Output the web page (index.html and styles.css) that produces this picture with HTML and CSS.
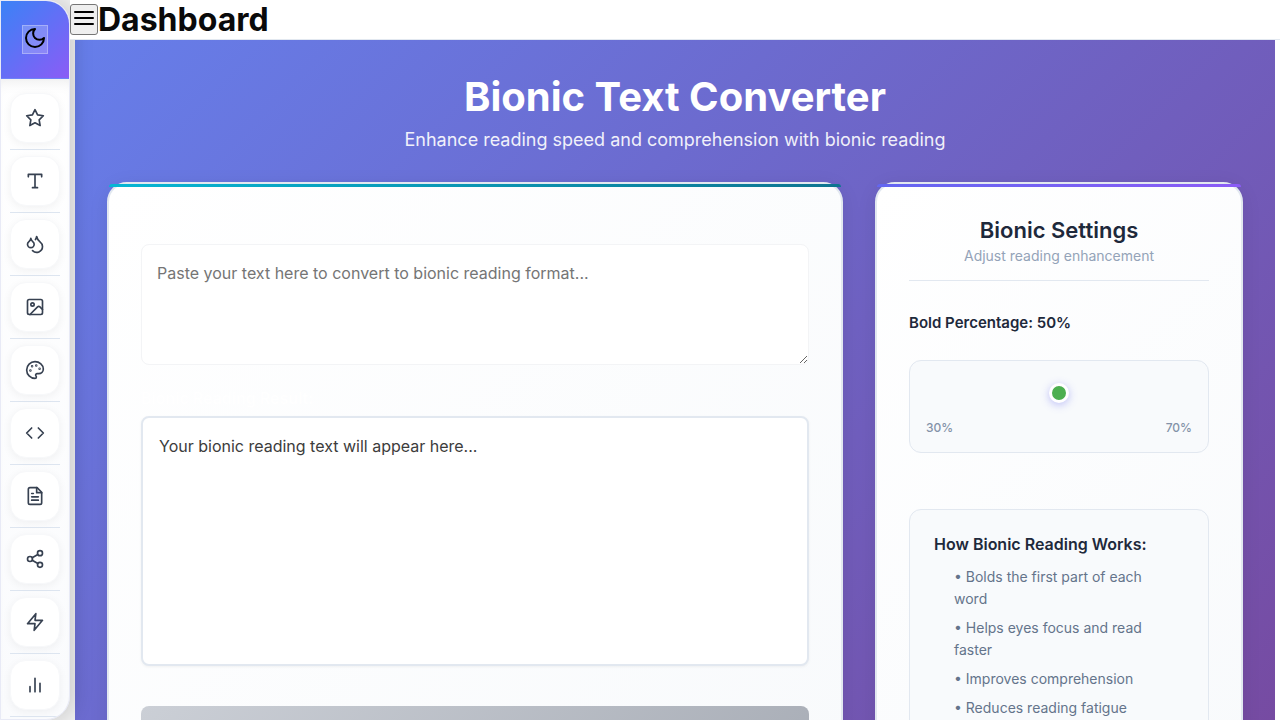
FILE: index.html
```html
<!DOCTYPE html>
<html lang="en">
<head>
<meta charset="utf-8">
<meta name="viewport" content="width=device-width, initial-scale=1">
<title>Bionic Text Converter</title>
<link rel="stylesheet" href="styles.css">
</head>
<body>
<div class="shell">
  <aside class="sidebar">
    <div class="brand">
      <button class="theme-toggle" type="button" aria-label="Toggle theme"><svg class="icon-lg" viewBox="0 0 24 24"><path d="M12 3a6 6 0 0 0 9 9 9 9 0 1 1-9-9Z"/></svg></button>
    </div>
    <nav class="tools" aria-label="Tools">
      <div class="tool"><a href="#favorites" aria-label="Favorites"><svg class="icon" viewBox="0 0 24 24"><polygon points="12 2 15.09 8.26 22 9.27 17 14.14 18.18 21.02 12 17.77 5.82 21.02 7 14.14 2 9.27 8.91 8.26 12 2"/></svg></a></div>
      <div class="tool"><a href="#text" aria-label="Text"><svg class="icon" viewBox="0 0 24 24"><path d="M4 7V4h16v3M9 20h6M12 4v16"/></svg></a></div>
      <div class="tool"><a href="#drops" aria-label="Colors"><svg class="icon" viewBox="0 0 24 24"><path d="M7 16.3c2.2 0 4-1.83 4-4.05 0-1.16-.57-2.26-1.71-3.19S7.29 6.75 7 5.3c-.29 1.45-1.14 2.84-2.29 3.76S3 11.1 3 12.25c0 2.22 1.8 4.05 4 4.05z"/><path d="M12.56 6.6A10.97 10.97 0 0 0 14 3.02c.5 2.5 2 4.9 4 6.5s3 3.5 3 5.5a6.98 6.98 0 0 1-11.91 4.97"/></svg></a></div>
      <div class="tool"><a href="#image" aria-label="Images"><svg class="icon" viewBox="0 0 24 24"><rect x="3" y="3" width="18" height="18" rx="2"/><circle cx="9" cy="9" r="2"/><path d="m21 15-3.086-3.086a2 2 0 0 0-2.828 0L6 21"/></svg></a></div>
      <div class="tool"><a href="#palette" aria-label="Palette"><svg class="icon" viewBox="0 0 24 24"><circle cx="13.5" cy="6.5" r=".5"/><circle cx="17.5" cy="10.5" r=".5"/><circle cx="8.5" cy="7.5" r=".5"/><circle cx="6.5" cy="12.5" r=".5"/><path d="M12 2C6.5 2 2 6.5 2 12s4.5 10 10 10c.926 0 1.648-.746 1.648-1.688 0-.437-.18-.835-.437-1.125-.29-.289-.438-.652-.438-1.125a1.64 1.64 0 0 1 1.668-1.668h1.996c3.051 0 5.555-2.503 5.555-5.554C21.965 6.012 17.461 2 12 2z"/></svg></a></div>
      <div class="tool"><a href="#code" aria-label="Code"><svg class="icon" viewBox="0 0 24 24"><path d="m16 18 6-6-6-6M8 6l-6 6 6 6"/></svg></a></div>
      <div class="tool"><a href="#documents" aria-label="Documents"><svg class="icon" viewBox="0 0 24 24"><path d="M14.500 2H6a2 2 0 0 0-2 2v16a2 2 0 0 0 2 2h12a2 2 0 0 0 2-2V7.500z"/><path d="M14 2v6h6M16 13H8M16 17H8M10 9H8"/></svg></a></div>
      <div class="tool"><a href="#share" aria-label="Share"><svg class="icon" viewBox="0 0 24 24"><circle cx="18" cy="5" r="3"/><circle cx="6" cy="12" r="3"/><circle cx="18" cy="19" r="3"/><path d="m8.590 13.510 6.830 3.980M15.410 6.510l-6.820 3.980"/></svg></a></div>
      <div class="tool"><a href="#quick" aria-label="Quick tools"><svg class="icon" viewBox="0 0 24 24"><polygon points="13 2 3 14 12 14 11 22 21 10 12 10 13 2"/></svg></a></div>
      <div class="tool"><a href="#stats" aria-label="Statistics"><svg class="icon" viewBox="0 0 24 24"><path d="M18 20V10M12 20V4M6 20v-6"/></svg></a></div>
    </nav>
  </aside>

  <div class="content">
    <header class="topbar">
      <button class="menu" type="button" aria-label="Menu"><svg class="icon-lg" viewBox="0 0 24 24"><path d="M3 6h18M3 12h18M3 18h18"/></svg></button>
      <h1 class="topbar-title">Dashboard</h1>
    </header>

    <main class="page">
      <div class="page-head">
        <h2 class="page-title">Bionic Text Converter</h2>
        <p class="page-subtitle">Enhance reading speed and comprehension with bionic reading</p>
      </div>

      <div class="columns">
        <section class="card card-main">
          <textarea class="source" aria-label="Text to convert" placeholder="Paste your text here to convert to bionic reading format..."></textarea>
          <h3 class="result-label" id="result-label">Bionic Reading Result:</h3>
          <div class="result" role="region" aria-labelledby="result-label">Your bionic reading text will appear here...</div>
          <button class="action" type="button" aria-label="Copy result" disabled></button>
        </section>

        <aside class="card card-settings">
          <div class="settings-head">
            <h3 class="settings-title">Bionic Settings</h3>
            <p class="settings-subtitle">Adjust reading enhancement</p>
          </div>
          <label class="range-label" for="bold">Bold Percentage: 50%</label>
          <div class="range-box">
            <input class="range" id="bold" type="range" min="30" max="70" value="50">
            <div class="range-ends"><span>30%</span><span>70%</span></div>
          </div>
          <div class="info">
            <h4 class="info-title">How Bionic Reading Works:</h4>
            <ul class="info-list">
              <li>• Bolds the first part of each word</li>
              <li>• Helps eyes focus and read faster</li>
              <li>• Improves comprehension</li>
              <li>• Reduces reading fatigue</li>
            </ul>
          </div>
        </aside>
      </div>
    </main>
  </div>
</div>
</body>
</html>
```
FILE: styles.css
```css
* { box-sizing: border-box; }

body {
  margin: 0;
  font-family: Inter, "Liberation Sans", sans-serif;
  color: #1e293b;
  background: #fff;
}

h1, h2, h3, h4, p, ul { margin: 0; padding: 0; }
button, textarea, input { font: inherit; }

svg {
  display: block;
  fill: none;
  stroke: currentColor;
  stroke-width: 2;
  stroke-linecap: round;
  stroke-linejoin: round;
}
.icon { width: 20px; height: 20px; }
.icon-lg { width: 24px; height: 24px; }

.shell {
  display: flex;
  height: 100vh;
  overflow: hidden;
  background: #f0f0f0;
}

/* Sidebar */
.sidebar {
  position: relative;
  z-index: 1;
  flex: none;
  width: 70px;
  overflow: hidden;
  border: 1px solid #e8eaf6;
  border-radius: 0 24px 24px 0;
  background: linear-gradient(180deg, #fff, #fafbfd);
  box-shadow: 4px 0 20px rgba(0, 0, 0, 0.16);
}
.brand {
  display: flex;
  align-items: center;
  justify-content: center;
  height: 78px;
  border-bottom: 1px solid #6d83f8;
  background: linear-gradient(135deg, #3b82f6, #8b5cf6);
}
.theme-toggle {
  padding: 0 0 3px;
  border: 1px solid rgba(255, 255, 255, 0.3);
  background: rgba(255, 255, 255, 0.2);
  color: #000;
}
.tools {
  display: flex;
  flex-direction: column;
  padding: 8px 9px 0;
  box-shadow: inset 0 12px 16px -12px rgba(0, 0, 0, 0.1);
}
.tool {
  flex: none;
  padding: 6px 0;
  border-bottom: 1px solid #dde5f0;
}
.tool a {
  display: flex;
  align-items: center;
  justify-content: center;
  height: 50px;
  border: 1px solid #f7f8fa;
  border-radius: 16px;
  background: #fff;
  color: #374151;
  box-shadow: 0 2px 8px rgba(0, 0, 0, 0.05);
}

/* Top bar */
.content {
  display: flex;
  flex: 1;
  flex-direction: column;
  min-width: 0;
  background: linear-gradient(90deg, transparent 50%, #fff 50%);
}
.topbar {
  position: relative;
  z-index: 2;
  display: flex;
  flex: none;
  align-items: center;
  height: 40px;
  border-bottom: 1px solid #e2e8f0;
  background: #fff;
}
.menu {
  padding: 1px 1px 4px;
  border: 1px solid #767676;
  border-radius: 3px;
  background: #efefef;
  color: #000;
}
.topbar-title {
  font-size: 32px;
  line-height: 40px;
  color: #0a0a0a;
}

/* Page */
.page {
  flex: 1;
  min-height: 0;
  margin: 0 5px;
  padding: 32px;
  overflow: hidden;
  background: linear-gradient(135deg, #667eea, #764ba2);
}
.page-head {
  padding-bottom: 28px;
  text-align: center;
  color: #fff;
}
.page-title {
  font-size: 40px;
  line-height: 50px;
  font-weight: 700;
}
.page-subtitle {
  padding-top: 4px;
  font-size: 18px;
  line-height: 28px;
  opacity: 0.9;
}
.columns {
  display: grid;
  grid-template-columns: 2fr 1fr;
  gap: 32px;
}
.card {
  position: relative;
  min-width: 0;
  padding: 32px;
  border: 2px solid #e2e8f0;
  border-radius: 20px;
  background: linear-gradient(135deg, #fff, #f8fafc);
  box-shadow: 0 4px 20px rgba(0, 0, 0, 0.08);
}
.card::before {
  content: "";
  position: absolute;
  top: 0;
  left: 0;
  right: 0;
  height: 3px;
  border-radius: 20px 20px 0 0;
}
.card-main::before { background: linear-gradient(90deg, #06b6d4, #0e7490); }
.card-settings::before { background: linear-gradient(90deg, #6366f1, #8b5cf6); }

.source {
  display: block;
  width: 100%;
  height: 121px;
  margin-top: 28px;
  padding: 16px 15px;
  border: 1px solid #f3f4f6;
  border-radius: 8px;
  background: #fff;
  color: #333;
  font-size: 16px;
  line-height: 24px;
  resize: vertical;
}
.source::placeholder { color: #757575; }
.result-label {
  padding: 21px 0 6px;
  color: #fff;
  font-size: 16px;
  line-height: 24px;
  font-weight: 600;
}
.result {
  min-height: 250px;
  padding: 16px;
  border: 2px solid #e2e8f0;
  border-radius: 8px;
  background: #fff;
  box-shadow: 0 1px 3px rgba(0, 0, 0, 0.05);
  color: #3c3c3c;
  font-size: 16px;
  line-height: 24px;
}
.action {
  display: block;
  width: 100%;
  height: 52px;
  margin-top: 40px;
  border: 0;
  border-radius: 8px;
  background: linear-gradient(135deg, #cbcfd6, #a9aeb7);
}

/* Settings */
.settings-head {
  padding-bottom: 12px;
  border-bottom: 1px solid #e2e8f0;
  text-align: center;
}
.settings-title {
  font-size: 22px;
  line-height: 28px;
  font-weight: 600;
}
.settings-subtitle {
  font-size: 14px;
  line-height: 24px;
  color: #94a3b8;
}
.range-label {
  display: block;
  padding: 30px 0 25px;
  font-size: 15px;
  line-height: 24px;
  font-weight: 600;
}
.range-box {
  padding: 22px 16px 14px;
  border: 1px solid #e2e8f0;
  border-radius: 12px;
  background: #f8fafc;
}
.range {
  display: block;
  width: 100%;
  height: 20px;
  margin: 0;
  appearance: none;
  background: transparent;
}
.range::-webkit-slider-thumb {
  appearance: none;
  width: 20px;
  height: 20px;
  border: 3px solid #fff;
  border-radius: 50%;
  background: #4caf50;
  box-shadow: 0 2px 8px rgba(99, 102, 241, 0.4);
}
.range-ends {
  display: flex;
  justify-content: space-between;
  padding-top: 15px;
  font-size: 12px;
  line-height: 20px;
  font-weight: 500;
  color: #8492a8;
}
.info {
  margin-top: 56px;
  padding: 22px 24px 24px;
  border: 1px solid #e2e8f0;
  border-radius: 12px;
  background: #f8fafc;
}
.info-title {
  padding-bottom: 10px;
  font-size: 16px;
  line-height: 24px;
  font-weight: 600;
}
.info-list {
  padding: 0 20px;
  list-style: none;
  font-size: 14px;
  line-height: 22px;
  color: #64748b;
}
.info-list li { margin-bottom: 7px; }
```
